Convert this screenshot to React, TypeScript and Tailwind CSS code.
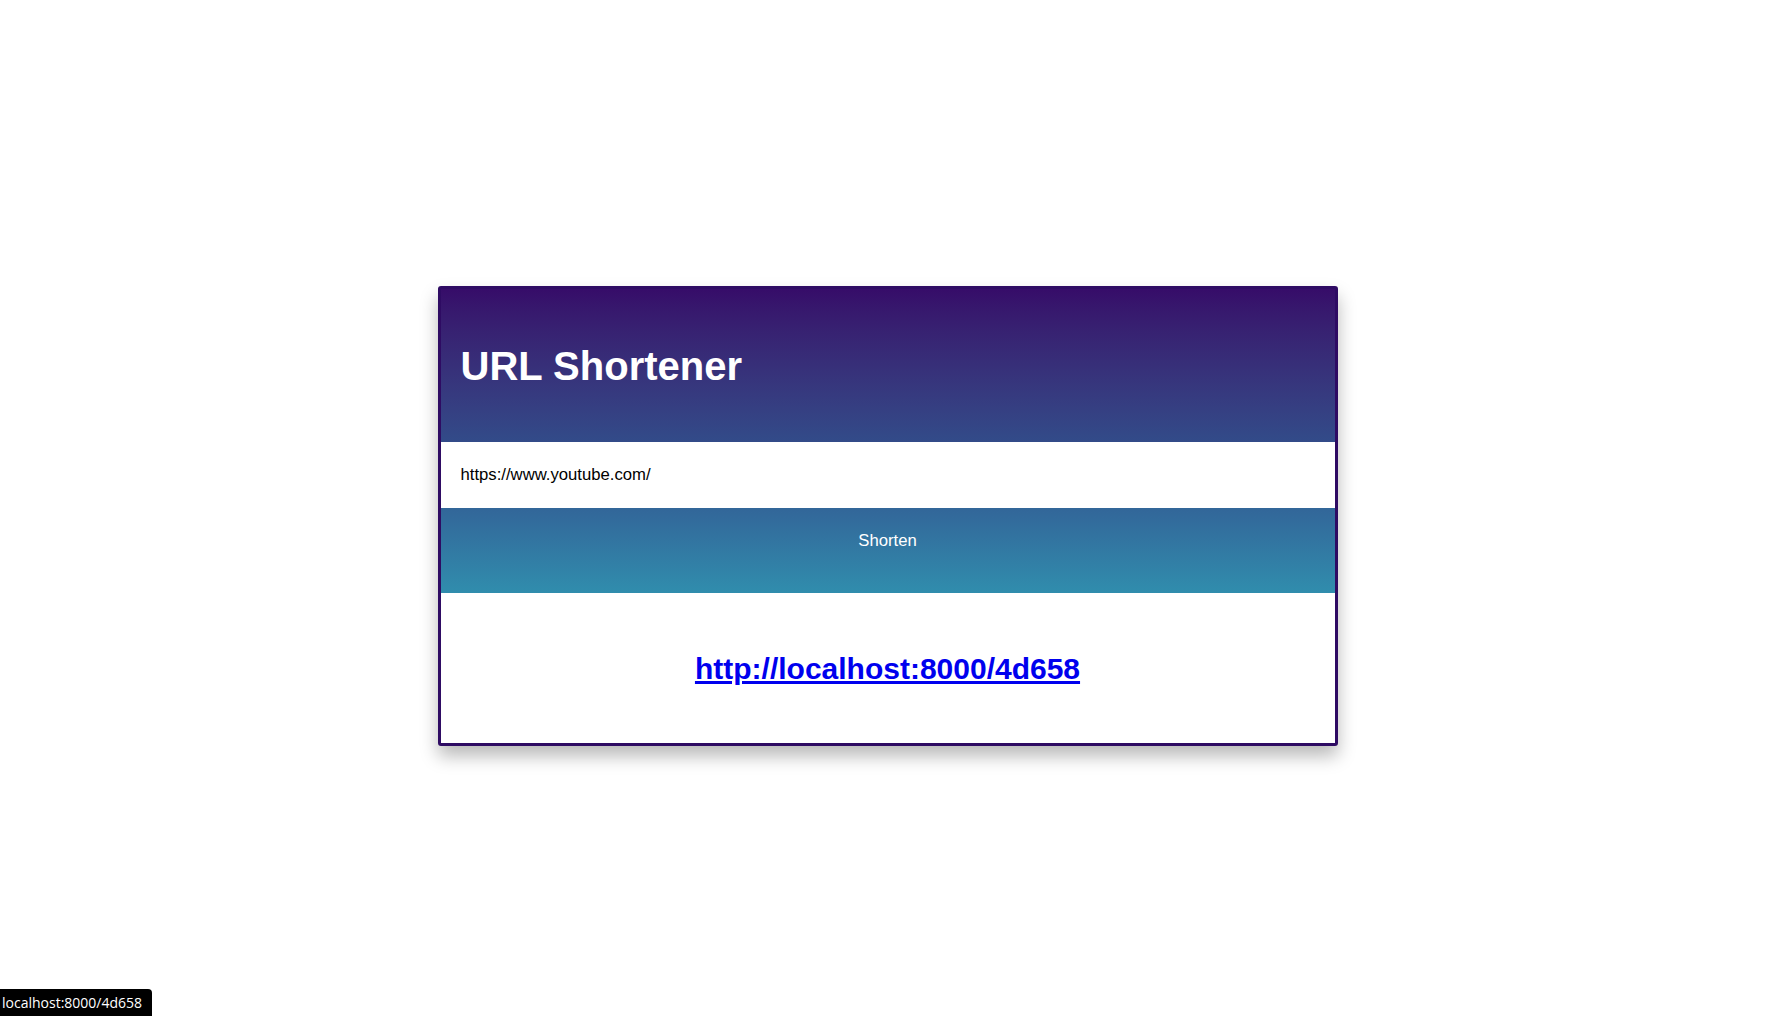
import { useState } from "react";

export default function App() {
  const [url, setUrl] = useState("https://www.youtube.com/");
  const shortUrl = "http://localhost:8000/4d658";

  return (
    <div className="min-h-screen bg-white flex justify-center pt-[286px] font-['Liberation_Sans',Arial,sans-serif]">
      <div className="w-[900px] h-[460px] flex flex-col rounded-[3px] border-[3px] border-[#2e0b63] bg-white shadow-[0_10px_18px_rgba(0,0,0,0.28)] overflow-hidden">
        <div className="h-[153px] shrink-0 flex items-center px-5 bg-gradient-to-b from-[#360c69] to-[#324b89]">
          <h1 className="text-[40px] font-bold text-white leading-none">URL Shortener</h1>
        </div>

        <input
          value={url}
          onChange={(e) => setUrl(e.target.value)}
          className="h-[66px] shrink-0 px-5 text-[16.7px] text-black bg-white outline-none"
        />

        <button className="h-[85px] shrink-0 pb-5 text-[16.7px] text-white bg-gradient-to-b from-[#326699] to-[#308dad]">
          Shorten
        </button>

        <div className="flex-1 flex items-center justify-center">
          <a href={shortUrl} className="text-[30px] font-bold text-[#0000ee] underline">
            {shortUrl}
          </a>
        </div>
      </div>

      <div className="fixed left-0 bottom-0 h-[27px] w-[152px] pl-[2px] flex items-center bg-black rounded-tr-[4px] text-[14px] text-white font-['Open_Sans',sans-serif]">
        localhost:8000/4d658
      </div>
    </div>
  );
}
